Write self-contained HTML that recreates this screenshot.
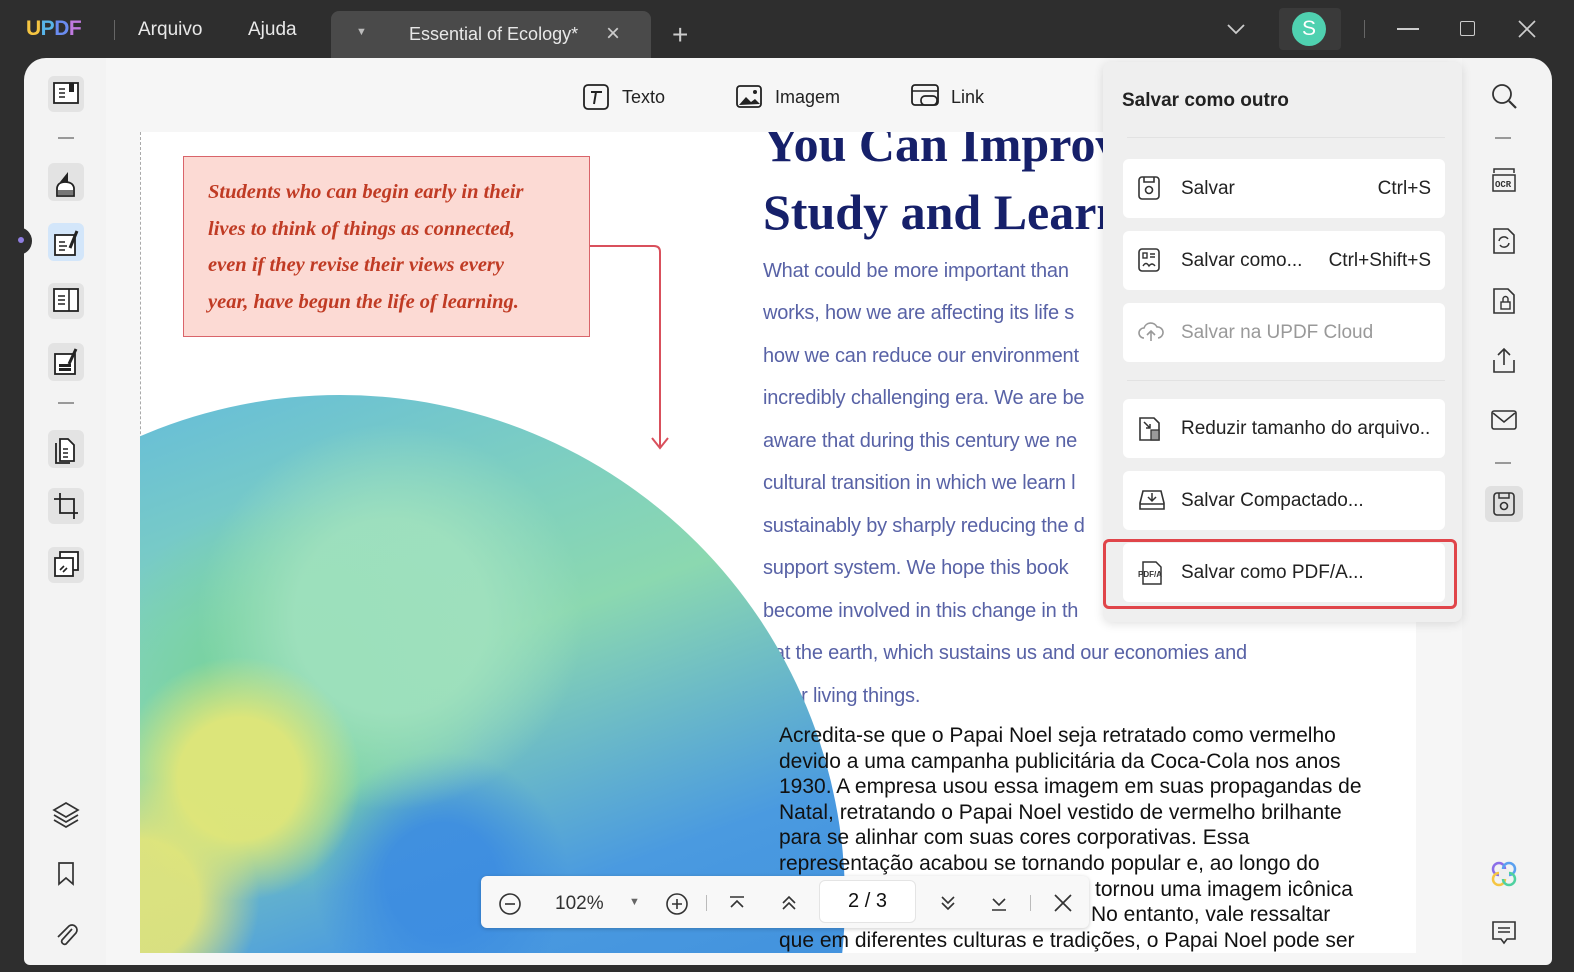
<!DOCTYPE html>
<html><head><meta charset="utf-8"><style>
*{box-sizing:border-box;margin:0;padding:0}
body{width:1574px;height:972px;background:#2e2e2e;font-family:"Liberation Sans",sans-serif;position:relative;overflow:hidden}
.abs{position:absolute}
.tb{color:#e8e8e8;font-size:19px}
.item{position:absolute;left:1123px;width:322px;height:59px;background:#fff;border-radius:6px;font-size:19px;color:#222}
.item span.t{position:absolute;left:58px;top:19px}
.item span.k{position:absolute;right:14px;top:19px}
.item svg{position:absolute;left:14px;top:16px}
.p{position:absolute;left:623px;font-size:20px;color:#5862a6;letter-spacing:-0.2px;white-space:nowrap}
.b{position:absolute;left:639px;top:591px;font-size:21px;color:#111;line-height:25.6px;white-space:nowrap}
</style></head><body>
<!-- title bar -->
<div class="abs" style="left:26px;top:17px;font-size:21px;font-weight:bold;letter-spacing:-0.5px"><span style="color:#f5c542">U</span><span style="color:#58b4e8">P</span><span style="color:#6a8cf0">D</span><span style="color:#c07ae0">F</span></div>
<div class="abs" style="left:114px;top:20px;width:1px;height:20px;background:#666"></div>
<div class="abs tb" style="left:138px;top:19px">Arquivo</div>
<div class="abs tb" style="left:248px;top:19px">Ajuda</div>
<div class="abs" style="left:331px;top:11px;width:320px;height:48px;background:#4a4a4a;border-radius:8px 8px 0 0"></div>
<div class="abs" style="left:356px;top:26px;color:#bbb;font-size:11px">▼</div>
<div class="abs tb" style="left:409px;top:24px;font-size:18px">Essential of Ecology*</div>
<div class="abs" style="left:606px;top:20px;color:#ccc;font-size:24px">×</div>
<div class="abs" style="left:672px;top:19px;color:#ccc;font-size:28px;font-weight:300">+</div>
<svg class="abs" style="left:1226px;top:22px" width="20" height="14"><path d="M2 3 L10 11 L18 3" stroke="#ccc" stroke-width="1.8" fill="none"/></svg>
<div class="abs" style="left:1279px;top:8px;width:62px;height:42px;background:#3a3a3a;border-radius:4px"></div>
<div class="abs" style="left:1292px;top:12px;width:34px;height:34px;border-radius:50%;background:#4fd1b0;color:#fff;font-size:21px;text-align:center;line-height:34px">S</div>
<div class="abs" style="left:1364px;top:20px;width:1px;height:18px;background:#666"></div>
<div class="abs" style="left:1397px;top:28px;width:22px;height:2px;background:#ccc"></div>
<div class="abs" style="left:1460px;top:21px;width:15px;height:15px;border:1.6px solid #ccc;border-radius:2px"></div>
<svg class="abs" style="left:1518px;top:20px" width="18" height="18"><path d="M1 1L17 17M17 1L1 17" stroke="#ccc" stroke-width="1.7"/></svg>

<!-- main window -->
<div class="abs" style="left:24px;top:58px;width:1528px;height:907px;background:#f3f3f3;border-radius:22px 22px 6px 6px;overflow:hidden">
  <div class="abs" style="left:82px;top:0;width:1356px;height:907px;background:#f6f6f6"></div>
</div>
<!-- left sidebar icons -->
<div class="abs" style="left:48px;top:76px;width:36px;height:36px;background:#e3e3e3;border-radius:6px"></div>
<svg class="abs" style="left:52px;top:81px" width="28" height="26"><rect x="2" y="2" width="24" height="20" fill="#fff" stroke="#222" stroke-width="1.8"/><path d="M7 8h6M7 12h6M7 16h6" stroke="#222" stroke-width="1.6"/><rect x="17" y="2" width="5" height="9" fill="#222"/></svg>
<div class="abs" style="left:58px;top:137px;width:16px;height:1.5px;background:#999"></div>
<div class="abs" style="left:48px;top:163px;width:36px;height:38px;background:#e3e3e3;border-radius:6px"></div>
<svg class="abs" style="left:53px;top:168px" width="26" height="30"><path d="M7 14 L15 4 L15 14Z" fill="#222"/><path d="M4 20 Q5 14 12 14 Q20 14 21 20 V28 H4Z" fill="#fff" stroke="#222" stroke-width="1.8"/><rect x="5" y="22" width="15" height="5" fill="#777"/></svg>
<div class="abs" style="left:48px;top:223px;width:36px;height:38px;background:#d3e6fa;border-radius:6px"></div>
<svg class="abs" style="left:52px;top:228px" width="30" height="30"><rect x="3" y="7" width="20" height="20" fill="#fff" stroke="#222" stroke-width="1.8"/><path d="M7 14h6M7 18h8M7 22h6" stroke="#222" stroke-width="1.6"/><path d="M18 20L25 3" stroke="#222" stroke-width="3"/></svg>
<div class="abs" style="left:16px;top:227px;width:16px;height:28px;background:#2e2e2e;border-radius:0 14px 14px 0"></div>
<div class="abs" style="left:18px;top:237px;width:6px;height:6px;border-radius:50%;background:#8f7ee0"></div>
<div class="abs" style="left:48px;top:283px;width:36px;height:36px;background:#e3e3e3;border-radius:6px"></div>
<svg class="abs" style="left:52px;top:287px" width="28" height="26"><rect x="2" y="2" width="24" height="22" fill="#fff" stroke="#222" stroke-width="1.8"/><path d="M17 2v22M6 9h7M6 13h7M6 17h7" stroke="#222" stroke-width="1.6"/></svg>
<div class="abs" style="left:48px;top:343px;width:36px;height:38px;background:#e3e3e3;border-radius:6px"></div>
<svg class="abs" style="left:52px;top:346px" width="30" height="32"><rect x="3" y="8" width="20" height="20" fill="#fff" stroke="#222" stroke-width="1.8"/><rect x="7" y="18" width="12" height="3" fill="#222"/><rect x="7" y="22" width="12" height="3" fill="#222"/><path d="M17 18L24 3" stroke="#222" stroke-width="3"/></svg>
<div class="abs" style="left:58px;top:402px;width:16px;height:1.5px;background:#999"></div>
<div class="abs" style="left:48px;top:430px;width:36px;height:38px;background:#e3e3e3;border-radius:6px"></div>
<svg class="abs" style="left:52px;top:435px" width="28" height="30"><path d="M8 4h8l6 6v16H8Z" fill="#fff" stroke="#222" stroke-width="1.8"/><path d="M4 8v20h14" stroke="#222" stroke-width="1.8" fill="none"/><path d="M11 14h5M11 18h5M11 22h5" stroke="#222" stroke-width="1.5"/></svg>
<div class="abs" style="left:48px;top:488px;width:36px;height:36px;background:#e3e3e3;border-radius:6px"></div>
<svg class="abs" style="left:52px;top:491px" width="28" height="30"><path d="M8 2v20h18M2 8h20v20" stroke="#222" stroke-width="1.8" fill="none"/></svg>
<div class="abs" style="left:48px;top:547px;width:36px;height:36px;background:#e3e3e3;border-radius:6px"></div>
<svg class="abs" style="left:52px;top:550px" width="28" height="30"><rect x="8" y="2" width="18" height="18" fill="#fff" stroke="#222" stroke-width="1.8"/><rect x="3" y="8" width="18" height="18" fill="#fff" stroke="#222" stroke-width="1.8"/><path d="M8 20l4-4M11 22l4-4" stroke="#222" stroke-width="1.6"/></svg>
<svg class="abs" style="left:51px;top:800px" width="30" height="28"><path d="M15 3L27 10L15 17L3 10Z" fill="none" stroke="#333" stroke-width="1.7"/><path d="M3 15L15 22L27 15M3 20L15 27L27 20" fill="none" stroke="#333" stroke-width="1.7"/></svg>
<svg class="abs" style="left:56px;top:861px" width="20" height="26"><path d="M3 2h14v21l-7-6-7 6Z" fill="none" stroke="#333" stroke-width="1.7"/></svg>
<svg class="abs" style="left:53px;top:920px" width="26" height="28"><path d="M19 9L9 20a3 3 0 0 0 4 4L23 13a5 5 0 0 0-7-7L5 17" fill="none" stroke="#333" stroke-width="1.7"/></svg>

<!-- top tools -->
<svg class="abs" style="left:581px;top:83px" width="30" height="28"><rect x="3" y="2" width="24" height="24" rx="4" fill="none" stroke="#222" stroke-width="1.8"/><path d="M10 9h11M15 9l-2 12" stroke="#222" stroke-width="2"/></svg>
<div class="abs" style="left:622px;top:87px;font-size:18px;color:#222">Texto</div>
<svg class="abs" style="left:734px;top:83px" width="30" height="28"><rect x="3" y="3" width="24" height="21" rx="3" fill="none" stroke="#222" stroke-width="1.8"/><path d="M5 22l7-8 5 5 4-3 5 5Z" fill="#222"/><circle cx="21" cy="9" r="2" fill="#222"/></svg>
<div class="abs" style="left:775px;top:87px;font-size:18px;color:#222">Imagem</div>
<svg class="abs" style="left:910px;top:83px" width="32" height="28"><rect x="2" y="2" width="26" height="20" rx="3" fill="none" stroke="#222" stroke-width="1.8"/><path d="M2 8h26" stroke="#222" stroke-width="1.6"/><rect x="11" y="13" width="16" height="9" rx="4" fill="#f6f6f6" stroke="#222" stroke-width="1.7"/></svg>
<div class="abs" style="left:951px;top:87px;font-size:18px;color:#222">Link</div>

<!-- page -->
<div class="abs" style="left:140px;top:132px;width:1276px;height:821px;background:#fff;overflow:hidden">
  <div class="abs" style="left:0;top:0;width:0;height:821px;border-left:1.5px dashed #aaa"></div>
  <div class="p" style="top:128px">What could be more important than</div>
  <div class="p" style="top:170px">works, how we are affecting its life s</div>
  <div class="p" style="top:213px">how we can reduce our environment</div>
  <div class="p" style="top:255px">incredibly challenging era. We are be</div>
  <div class="p" style="top:298px">aware that during this century we ne</div>
  <div class="p" style="top:340px">cultural transition in which we learn l</div>
  <div class="p" style="top:383px">sustainably by sharply reducing the d</div>
  <div class="p" style="top:425px">support system. We hope this book</div>
  <div class="p" style="top:468px">become involved in this change in th</div>
  <div class="p" style="top:510px">eat the earth, which sustains us and our economies and</div>
  <div class="p" style="top:553px">other living things.</div>
  <div class="abs" style="left:-305px;top:263px;width:1010px;height:1010px;border-radius:50%;background:
   radial-gradient(circle at 40% 38%,rgba(225,230,120,.95) 0 7%,transparent 14%),
   radial-gradient(circle at 30% 50%,rgba(230,230,120,.9) 0 7%,transparent 14%),
   radial-gradient(circle at 55% 22%,rgba(160,225,190,.9) 0 10%,transparent 20%),
   radial-gradient(circle at 60% 48%,rgba(60,140,225,.9) 0 7%,transparent 16%),
   radial-gradient(circle at 45% 30%,rgba(120,210,160,.9) 0 10%,transparent 22%),
   linear-gradient(160deg,#5ab4e6 0%,#7fd0bf 25%,#8bd8b0 35%,#4a9ae0 55%,#2f7fd8 100%)"></div>
  <div class="abs" style="left:43px;top:24px;width:407px;height:181px;background:#fcdad4;border:1.5px solid #d9646a"></div>
  <div class="abs" style="left:68px;top:42px;font-family:'Liberation Serif',serif;font-style:italic;font-weight:bold;font-size:20.5px;line-height:36.7px;color:#c03b24">Students who can begin early in their<br>lives to think of things as connected,<br>even if they revise their views every<br>year, have begun the life of learning.</div>
  <svg class="abs" style="left:450px;top:108px" width="80" height="215"><path d="M0 6H64Q70 6 70 12V208M62 198L70 208L78 198" fill="none" stroke="#d9505c" stroke-width="2"/></svg>
  <div class="abs" style="left:623px;top:-22px;font-family:'Liberation Serif',serif;font-weight:bold;font-size:50px;color:#16206a;line-height:68px;white-space:nowrap">You Can Improve<br>Study and Learn</div>
  <div class="b">Acredita-se que o Papai Noel seja retratado como vermelho<br>devido a uma campanha publicitária da Coca-Cola nos anos<br>1930. A empresa usou essa imagem em suas propagandas de<br>Natal, retratando o Papai Noel vestido de vermelho brilhante<br>para se alinhar com suas cores corporativas. Essa<br>representação acabou se tornando popular e, ao longo do<br><span style="padding-left:316px">tornou uma imagem icônica</span><br><span style="padding-left:312px">No entanto, vale ressaltar</span><br>que em diferentes culturas e tradições, o Papai Noel pode ser</div>
</div>

<!-- bottom nav bar -->
<div class="abs" style="left:481px;top:876px;width:608px;height:52px;background:#f8f8f8;border-radius:6px;box-shadow:0 1px 4px rgba(0,0,0,.2)"></div>
<svg class="abs" style="left:497px;top:891px" width="26" height="26"><circle cx="13" cy="13" r="10" fill="none" stroke="#333" stroke-width="1.6"/><path d="M8 13h10" stroke="#333" stroke-width="1.6"/></svg>
<div class="abs" style="left:555px;top:893px;font-size:19px;color:#333">102%</div>
<div class="abs" style="left:629px;top:896px;font-size:11px;color:#666">▼</div>
<svg class="abs" style="left:664px;top:891px" width="26" height="26"><circle cx="13" cy="13" r="10" fill="none" stroke="#333" stroke-width="1.6"/><path d="M8 13h10M13 8v10" stroke="#333" stroke-width="1.6"/></svg>
<div class="abs" style="left:706px;top:895px;width:1px;height:16px;background:#bbb"></div>
<svg class="abs" style="left:727px;top:893px" width="20" height="20"><path d="M3 4h14M4 14l6-6 6 6" fill="none" stroke="#333" stroke-width="1.6"/></svg>
<svg class="abs" style="left:779px;top:893px" width="20" height="20"><path d="M4 10l6-6 6 6M4 16l6-6 6 6" fill="none" stroke="#333" stroke-width="1.6"/></svg>
<div class="abs" style="left:819px;top:880px;width:97px;height:43px;background:#fff;border-radius:6px;border:1px solid #e4e4e4;font-size:20px;text-align:center;line-height:41px;color:#111">2 / 3</div>
<svg class="abs" style="left:938px;top:893px" width="20" height="20"><path d="M4 4l6 6 6-6M4 10l6 6 6-6" fill="none" stroke="#333" stroke-width="1.6"/></svg>
<svg class="abs" style="left:989px;top:893px" width="20" height="20"><path d="M4 6l6 6 6-6M3 17h14" fill="none" stroke="#333" stroke-width="1.6"/></svg>
<div class="abs" style="left:1030px;top:895px;width:1px;height:16px;background:#bbb"></div>
<svg class="abs" style="left:1053px;top:893px" width="20" height="20"><path d="M2 2l16 16M18 2L2 18" stroke="#333" stroke-width="1.7"/></svg>

<!-- popup -->
<div class="abs" style="left:1103px;top:62px;width:359px;height:560px;background:#efefef;border-radius:8px;box-shadow:0 2px 10px rgba(0,0,0,.12)"></div>
<div class="abs" style="left:1122px;top:90px;font-size:19px;font-weight:bold;color:#222">Salvar como outro</div>
<div class="abs" style="left:1127px;top:137px;width:318px;height:1px;background:#e2e2e2"></div>
<div class="item" style="top:159px"><svg width="24" height="26"><rect x="2" y="2" width="20" height="22" rx="3" fill="none" stroke="#333" stroke-width="1.6"/><path d="M7 2v5h10V2" fill="none" stroke="#333" stroke-width="1.6"/><circle cx="12" cy="15" r="3.5" fill="none" stroke="#333" stroke-width="1.6"/></svg><span class="t">Salvar</span><span class="k">Ctrl+S</span></div>
<div class="item" style="top:231px"><svg width="24" height="26"><rect x="2" y="2" width="20" height="22" rx="3" fill="none" stroke="#333" stroke-width="1.6"/><rect x="6" y="6" width="4" height="5" fill="none" stroke="#333" stroke-width="1.4"/><path d="M13 7h5M13 10h5M6 19q3-5 6 0q3-4 6 0" fill="none" stroke="#333" stroke-width="1.4"/></svg><span class="t">Salvar como...</span><span class="k">Ctrl+Shift+S</span></div>
<div class="item" style="top:303px"><svg width="28" height="26"><path d="M7 19a5 5 0 0 1 0-10 7 7 0 0 1 13-1 5 5 0 0 1 1 11" fill="none" stroke="#999" stroke-width="1.6"/><path d="M14 22v-9M10 16l4-4 4 4" fill="none" stroke="#999" stroke-width="1.6"/></svg><span class="t" style="color:#999">Salvar na UPDF Cloud</span></div>
<div class="abs" style="left:1127px;top:380px;width:318px;height:1px;background:#e2e2e2"></div>
<div class="item" style="top:399px"><svg width="26" height="28"><path d="M3 3h14l5 5v17H3Z" fill="none" stroke="#333" stroke-width="1.6"/><path d="M7 7l6 6M13 9v4H9" fill="none" stroke="#333" stroke-width="1.5"/><rect x="14" y="15" width="8" height="10" fill="#999" stroke="#333" stroke-width="1.3"/></svg><span class="t">Reduzir tamanho do arquivo..</span></div>
<div class="item" style="top:471px"><svg width="30" height="26"><path d="M3 16l3-12h18l3 12v6H3Z" fill="none" stroke="#333" stroke-width="1.6"/><path d="M3 17h24" stroke="#333" stroke-width="1.4"/><path d="M15 6v8M11 10l4 4 4-4" fill="none" stroke="#333" stroke-width="1.5"/></svg><span class="t">Salvar Compactado...</span></div>
<div class="abs" style="left:1103px;top:539px;width:354px;height:70px;border:3px solid #e0454a;border-radius:6px"></div>
<div class="item" style="top:543px;height:59px"><svg width="30" height="28"><path d="M6 3h13l5 5v17H6Z" fill="#fff" stroke="#333" stroke-width="1.5"/><text x="1" y="18" font-size="8" font-family="Liberation Sans" font-weight="bold" fill="#333">PDF/A</text></svg><span class="t">Salvar como PDF/A...</span></div>

<!-- right sidebar -->
<svg class="abs" style="left:1490px;top:82px" width="30" height="30"><circle cx="12" cy="12" r="9" fill="none" stroke="#333" stroke-width="1.8"/><path d="M19 19l7 7" stroke="#333" stroke-width="2.2"/></svg>
<div class="abs" style="left:1495px;top:137px;width:16px;height:1.5px;background:#999"></div>
<svg class="abs" style="left:1489px;top:166px" width="30" height="30"><path d="M5 7V3h20v4" fill="none" stroke="#333" stroke-width="1.5"/><rect x="4" y="9" width="22" height="16" fill="none" stroke="#333" stroke-width="1.5"/><text x="6" y="21" font-size="9" font-family="Liberation Mono" font-weight="bold" fill="#333">OCR</text></svg>
<svg class="abs" style="left:1490px;top:226px" width="28" height="30"><path d="M4 3h14l6 6v18H4Z" fill="none" stroke="#333" stroke-width="1.6"/><path d="M9 15a5 5 0 0 1 9-2M19 17a5 5 0 0 1-9 2" fill="none" stroke="#333" stroke-width="1.5"/></svg>
<svg class="abs" style="left:1490px;top:286px" width="28" height="30"><path d="M4 3h14l6 6v18H4Z" fill="none" stroke="#333" stroke-width="1.6"/><rect x="11" y="16" width="9" height="7" fill="none" stroke="#333" stroke-width="1.4"/><path d="M13 16v-3a2.5 2.5 0 0 1 5 0v3" fill="none" stroke="#333" stroke-width="1.4"/></svg>
<svg class="abs" style="left:1490px;top:346px" width="28" height="30"><path d="M14 3v16M8 9l6-6 6 6M4 14v12h20V14" fill="none" stroke="#333" stroke-width="1.6"/></svg>
<svg class="abs" style="left:1490px;top:407px" width="28" height="26"><rect x="2" y="4" width="24" height="18" rx="2" fill="none" stroke="#333" stroke-width="1.6"/><path d="M3 6l11 9 11-9" fill="none" stroke="#333" stroke-width="1.6"/></svg>
<div class="abs" style="left:1495px;top:462px;width:16px;height:1.5px;background:#999"></div>
<div class="abs" style="left:1485px;top:486px;width:38px;height:36px;background:#e0e0e0;border-radius:6px"></div>
<svg class="abs" style="left:1491px;top:490px" width="26" height="28"><rect x="3" y="3" width="20" height="22" rx="3" fill="none" stroke="#333" stroke-width="1.6"/><path d="M8 3v5h10V3" fill="none" stroke="#333" stroke-width="1.5"/><circle cx="13" cy="16" r="3.5" fill="none" stroke="#333" stroke-width="1.6"/></svg>
<svg class="abs" style="left:1489px;top:859px" width="30" height="30"><circle cx="10" cy="10" r="6" fill="none" stroke="#8a6ee8" stroke-width="2.5"/><circle cx="20" cy="10" r="6" fill="none" stroke="#5aa0f0" stroke-width="2.5"/><circle cx="10" cy="20" r="6" fill="none" stroke="#f5c542" stroke-width="2.5"/><circle cx="20" cy="20" r="6" fill="none" stroke="#4fd1a0" stroke-width="2.5"/><rect x="10" y="10" width="10" height="10" fill="#efefef"/></svg>
<svg class="abs" style="left:1490px;top:919px" width="28" height="28"><path d="M3 3h22v17H17l-3 4-3-4H3Z" fill="none" stroke="#333" stroke-width="1.6"/><path d="M8 9h12M8 13h12" stroke="#333" stroke-width="1.5"/></svg>
</body></html>
